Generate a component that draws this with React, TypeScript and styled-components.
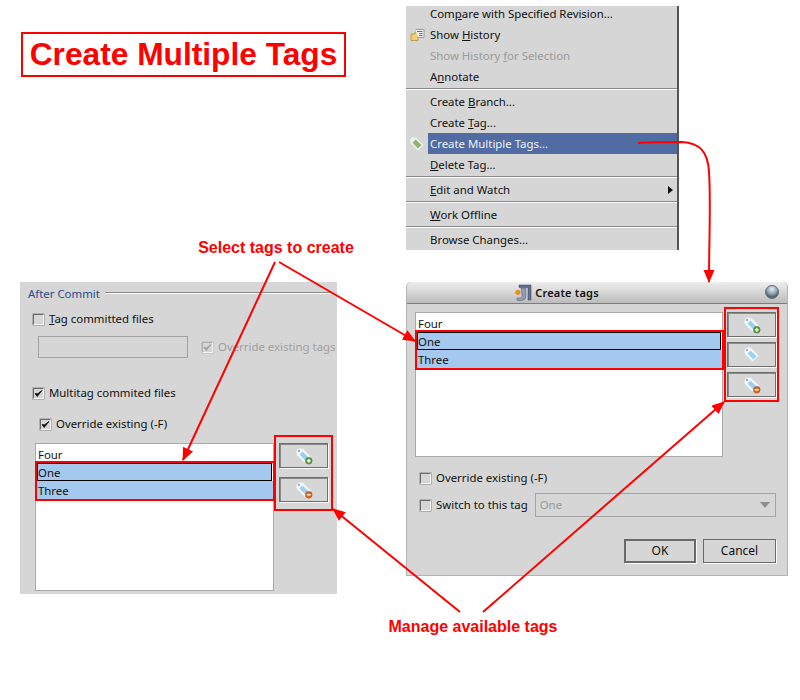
import React from "react";
import styled, { createGlobalStyle, css } from "styled-components";

const Global = createGlobalStyle`
	html, body {
		margin: 0;
		background: #fff;
	}
`;

const uiFont = `"Noto Sans", "Liberation Sans", sans-serif`;
const panel = "#d6d6d6";
const red = "#f00";

const Canvas = styled.div`
	position: relative;
	width: 800px;
	height: 700px;
	overflow: hidden;
	font-family: ${uiFont};
	font-size: 11.4px;
	line-height: 14px;
	color: #111;
`;

const Placed = styled.div<{ $x: number; $y: number; $w: number; $h: number }>`
	position: absolute;
	left: ${(p) => p.$x}px;
	top: ${(p) => p.$y}px;
	width: ${(p) => p.$w}px;
	height: ${(p) => p.$h}px;
	box-sizing: border-box;
`;

const Title = styled(Placed)`
	display: flex;
	align-items: center;
	justify-content: center;
	padding-bottom: 1px;
	border: 2px solid ${red};
	font: bold 31.7px "Liberation Sans", sans-serif;
	color: ${red};
	white-space: nowrap;
`;

const Note = styled(Placed)`
	font: bold 16px/18px "Liberation Sans", sans-serif;
	color: ${red};
	text-align: center;
	white-space: nowrap;
`;

/* context menu */
const Menu = styled(Placed)`
	display: flex;
	flex-direction: column;
	overflow: hidden;
	background: ${panel};
	border-right: 2px solid #555;
`;

const MenuRow = styled.div<{ $off?: boolean }>`
	display: flex;
	flex: none;
	height: 21px;
	align-items: center;
	color: ${(p) => (p.$off ? "#9a9a9a" : "#111")};
	&:first-child {
		margin-top: -3px;
	}
`;

const MenuIcon = styled.div`
	display: flex;
	flex: none;
	width: 22px;
	justify-content: center;
	align-items: center;
`;

const MenuLabel = styled.div<{ $active?: boolean }>`
	display: flex;
	flex: 1;
	height: 100%;
	align-items: center;
	justify-content: space-between;
	padding: 0 4px 0 2px;
	white-space: nowrap;
	${(p) =>
		p.$active &&
		css`
			background: #516ca3;
			color: #eef1f7;
		`}
`;

const SubArrow = styled.span`
	border-left: 5px solid #111;
	border-top: 4px solid transparent;
	border-bottom: 4px solid transparent;
`;

const MenuSep = styled.div`
	flex: none;
	height: 4px;
	background: linear-gradient(#d6d6d6 0 1px, #8a8a8a 1px 2px, #fbfbfb 2px 3px, #d6d6d6 3px);
`;

const Key = styled.span`
	text-decoration: underline;
	text-underline-offset: 1px;
`;

/* dialog */
const Dialog = styled(Placed)`
	display: flex;
	flex-direction: column;
	background: ${panel};
	border: 1px solid #b4b4b4;
	border-top: none;
	border-radius: 5px 5px 0 0;
`;

const TitleBar = styled.div`
	position: relative;
	display: flex;
	flex: none;
	height: 22px;
	align-items: center;
	justify-content: center;
	gap: 3px;
	padding-right: 80px;
	box-sizing: border-box;
	background: linear-gradient(#eeeeee, #bcbcbc);
	border-bottom: 1px solid #7d7d7d;
	border-radius: 5px 5px 0 0;
	font-weight: 600;
	font-size: 11px;
	letter-spacing: 0.2px;
`;

const Ball = styled.div`
	position: absolute;
	right: 8px;
	top: 3px;
	width: 14px;
	height: 14px;
	border-radius: 50%;
	border: 1px solid #5d6670;
	box-sizing: border-box;
	background: radial-gradient(circle at 50% 25%, #e9eef2 0, #93a5b5 45%, #4e5d6d 75%, #a9b8c5 100%);
`;

const DialogBody = styled.div`
	display: flex;
	padding: 3px 0 0 8px;
	align-items: flex-start;
	gap: 1px;
`;

const TagList = styled.div<{ $w: number; $h: number }>`
	flex: none;
	width: ${(p) => p.$w}px;
	height: ${(p) => p.$h}px;
	box-sizing: border-box;
	background: #fff;
	border: 1px solid #aaa;
	padding-top: 1px;
`;

const DialogList = styled(TagList)`
	margin-top: 5px;
`;

const ListItem = styled.div<{ $sel?: boolean; $focus?: boolean }>`
	height: 18px;
	line-height: 20px;
	box-sizing: border-box;
	padding-left: ${(p) => (p.$sel ? "1px" : "2px")};
	background: ${(p) => (p.$sel ? "#a4c8ee" : "transparent")};
	${(p) =>
		p.$focus &&
		css`
			border: 1px solid #000;
			line-height: 18px;
			padding-left: 0;
			margin-right: 1px;
		`}
`;

const Selection = styled.div`
	position: relative;
	margin: -2px -2px 0 -1px;
	border: 2px solid ${red};
`;

const ButtonBox = styled.div<{ $gap: number; $pad: string }>`
	position: relative;
	display: flex;
	flex: none;
	flex-direction: column;
	gap: ${(p) => p.$gap}px;
	padding: ${(p) => p.$pad};
	border: 2px solid ${red};
`;

const ToolButton = styled.div`
	display: flex;
	width: 49px;
	height: 25px;
	box-sizing: border-box;
	align-items: center;
	justify-content: center;
	background: ${panel};
	border: 1px solid #6e6e6e;
	box-shadow: 1px 1px 0 #fafafa, inset 1px 1px 0 #8a8a8a;
`;

const OptionRow = styled.div<{ $top: number; $left: number }>`
	display: flex;
	align-items: center;
	min-height: 14px;
	gap: 5px;
	margin: ${(p) => p.$top}px 0 0 ${(p) => p.$left}px;
	white-space: nowrap;
`;

const Box = styled.span<{ $off?: boolean }>`
	display: flex;
	flex: none;
	width: 11px;
	height: 11px;
	box-sizing: border-box;
	align-items: center;
	justify-content: center;
	border: 1px solid ${(p) => (p.$off ? "#aaa" : "#6a6a6a")};
	border-right-color: #f4f4f4;
	border-bottom-color: #f4f4f4;
	box-shadow: 0 0 0 0.5px ${(p) => (p.$off ? "#bbb" : "#8a8a8a")};
`;

const Combo = styled.div`
	display: flex;
	width: 241px;
	height: 24px;
	margin-left: 2px;
	box-sizing: border-box;
	align-items: center;
	justify-content: space-between;
	padding: 0 5px 0 4px;
	border: 1px solid #a3a3a3;
	color: #9a9a9a;
`;

const ComboArrow = styled.span`
	border-top: 6px solid #8f8f8f;
	border-left: 5px solid transparent;
	border-right: 5px solid transparent;
`;

const DialogActions = styled.div`
	display: flex;
	justify-content: flex-end;
	gap: 7px;
	margin-top: 22px;
	padding-right: 11px;
`;

const ActionButton = styled.div<{ $w: number; $default?: boolean }>`
	display: flex;
	width: ${(p) => p.$w}px;
	height: 24px;
	box-sizing: border-box;
	align-items: center;
	justify-content: center;
	border: ${(p) => (p.$default ? "2px" : "1px")} solid #6a6a6a;
	box-shadow: 1px 1px 0 #fafafa;
	font-size: 12px;
`;

/* settings panel */
const SettingsPanel = styled(Placed)`
	display: flex;
	flex-direction: column;
	padding: 5px 0 0 8px;
	background: ${panel};
`;

const Legend = styled.div`
	display: flex;
	height: 14px;
	align-items: center;
	gap: 5px;
	color: #2b4a86;
	padding-right: 6px;
	&::after {
		content: "";
		flex: 1;
		height: 2px;
		margin-top: -2px;
		background: linear-gradient(#8a8a8a 0 1px, #fafafa 1px);
	}
`;

const Field = styled.div`
	width: 150px;
	height: 22px;
	box-sizing: border-box;
	margin-right: 9px;
	border: 1px solid #a3a3a3;
`;

const FadedText = styled.span`
	color: #a0a0a0;
`;

const ListSection = styled.div`
	display: flex;
	align-items: flex-start;
	margin: 4px 0 0 7px;
`;

const SectionList = styled(TagList)`
	margin-top: 8px;
`;

const Overlay = styled.svg`
	position: absolute;
	left: 0;
	top: 0;
	pointer-events: none;
`;

type TagProps = { badge?: "add" | "del" };

const TagIcon = ({ badge }: TagProps) => (
	<svg width="18" height="18" viewBox="0 0 18 18">
		<path d="M1 4 L4 1 L8 1.5 L16 9.5 L9.5 16 L1.5 8 Z" fill="#f6f8fa" stroke="#cfd3d8" strokeWidth="0.7" />
		<path d="M7.5 4.5 L13.5 10.3 L10.3 13.5 L4.5 7.5 Z" fill="#9bd0f5" />
		<circle cx="4" cy="4" r="1.2" fill="#a3acb5" />
		{badge && (
			<>
				<circle cx="13.8" cy="13.8" r="3.3" fill={badge === "add" ? "#5f9c3c" : "#d8691f"} stroke={badge === "add" ? "#3f7a26" : "#a84c12"} strokeWidth="0.6" />
				<path d="M11.9 13.8 H15.7" stroke="#fff" strokeWidth="1.3" />
				{badge === "add" && <path d="M13.8 11.9 V15.7" stroke="#fff" strokeWidth="1.3" />}
			</>
		)}
	</svg>
);

const MenuTag = () => (
	<svg width="16" height="16" viewBox="0 0 18 18">
		<path d="M1 4 L4 1 L8 1.5 L16.5 10 L10 16.5 L1.5 8 Z" fill="#f0f0f0" stroke="#dcdcdc" strokeWidth="0.7" />
		<path d="M7.5 4 L14 10 L10 14 L4 7.5 Z" fill="#8db56c" />
	</svg>
);

const HistoryIcon = () => (
	<svg width="15" height="14" viewBox="0 0 15 14">
		<path d="M1 6 H5 V4 H8 V12.5 H1 Z" fill="#f2cf74" stroke="#b8913c" strokeWidth="0.8" />
		<path d="M5.5 1.5 H14 V9.5 H8" fill="#f4f4f4" stroke="#7d8aa0" strokeWidth="0.8" />
		<path d="M7 3.5 H12.5 M9 5.5 H12.5 M9 7.5 H12.5" stroke="#4f6fa8" strokeWidth="1" />
	</svg>
);

const LogoIcon = () => (
	<svg width="17" height="17" viewBox="0 0 17 17">
		<path d="M4 1 H16 V16 H13 V3.5 H4 Z" fill="#5f6f8f" stroke="#3c475e" strokeWidth="0.5" />
		<path d="M6 4 H11 V12 Q11 16 7 16.5 H2 V14 H5 Q7 14 7 12 Z" fill="#8f9bb3" stroke="#566178" strokeWidth="0.5" />
		<circle cx="2.9" cy="8.3" r="2.6" fill="#e88f24" />
	</svg>
);

const Tick = ({ color = "#111" }: { color?: string }) => (
	<svg width="9" height="9" viewBox="0 0 9 9">
		<path d="M1 4.5 L3.2 7.5 L8 1.5 L3.6 4.8 Z" fill={color} stroke={color} strokeWidth="0.8" />
	</svg>
);

const Arrows = () => (
	<Overlay width="800" height="700" fill="none" stroke={red} strokeWidth="2">
		<defs>
			<marker id="head" markerWidth="14" markerHeight="12" refX="12" refY="5.5" orient="auto" markerUnits="userSpaceOnUse">
				<path d="M0 0 L13 5.5 L0 11 Z" fill={red} stroke="none" />
			</marker>
		</defs>
		<path d="M638 143 C 655 142, 670 142, 682 142 C 700 143, 708 152, 709 172 C 711 200, 709 240, 709 282" markerEnd="url(#head)" />
		<path d="M275 262 L183 460" markerEnd="url(#head)" />
		<path d="M279 262 L415 341" markerEnd="url(#head)" />
		<path d="M460 612 L333 509" markerEnd="url(#head)" />
		<path d="M483 612 L724 402" markerEnd="url(#head)" />
	</Overlay>
);

const App = () => (
	<Canvas>
		<Global />
		<Title $x={21} $y={32} $w={325} $h={45}>
			Create Multiple Tags
		</Title>

		<Menu $x={406} $y={6} $w={273} $h={244}>
			<MenuRow>
				<MenuIcon />
				<MenuLabel>
					<span>Com<Key>p</Key>are with Specified Revision...</span>
				</MenuLabel>
			</MenuRow>
			<MenuRow>
				<MenuIcon>
					<HistoryIcon />
				</MenuIcon>
				<MenuLabel>
					<span>Show <Key>H</Key>istory</span>
				</MenuLabel>
			</MenuRow>
			<MenuRow $off>
				<MenuIcon />
				<MenuLabel>
					<span>Show History <Key>f</Key>or Selection</span>
				</MenuLabel>
			</MenuRow>
			<MenuRow>
				<MenuIcon />
				<MenuLabel>
					<span>A<Key>n</Key>notate</span>
				</MenuLabel>
			</MenuRow>
			<MenuSep />
			<MenuRow>
				<MenuIcon />
				<MenuLabel>
					<span>Create <Key>B</Key>ranch...</span>
				</MenuLabel>
			</MenuRow>
			<MenuRow>
				<MenuIcon />
				<MenuLabel>
					<span>Create <Key>T</Key>ag...</span>
				</MenuLabel>
			</MenuRow>
			<MenuRow>
				<MenuIcon>
					<MenuTag />
				</MenuIcon>
				<MenuLabel $active>
					<span>Create Multiple Tags...</span>
				</MenuLabel>
			</MenuRow>
			<MenuRow>
				<MenuIcon />
				<MenuLabel>
					<span><Key>D</Key>elete Tag...</span>
				</MenuLabel>
			</MenuRow>
			<MenuSep />
			<MenuRow>
				<MenuIcon />
				<MenuLabel>
					<span><Key>E</Key>dit and Watch</span>
					<SubArrow />
				</MenuLabel>
			</MenuRow>
			<MenuSep />
			<MenuRow>
				<MenuIcon />
				<MenuLabel>
					<span><Key>W</Key>ork Offline</span>
				</MenuLabel>
			</MenuRow>
			<MenuSep />
			<MenuRow>
				<MenuIcon />
				<MenuLabel>
					<span>Browse Changes...</span>
				</MenuLabel>
			</MenuRow>
		</Menu>

		<SettingsPanel $x={20} $y={282} $w={317} $h={312}>
			<Legend>After Commit</Legend>
			<OptionRow $top={11} $left={5}>
				<Box />
				<span><Key>T</Key>ag committed files</span>
			</OptionRow>
			<OptionRow $top={10} $left={10}>
				<Field />
				<Box $off>
					<Tick color="#a0a0a0" />
				</Box>
				<FadedText>Override existing tags</FadedText>
			</OptionRow>
			<OptionRow $top={28} $left={5}>
				<Box>
					<Tick />
				</Box>
				<span>Multitag commited files</span>
			</OptionRow>
			<OptionRow $top={17} $left={12}>
				<Box>
					<Tick />
				</Box>
				<span>Override existing (-F)</span>
			</OptionRow>
			<ListSection>
				<SectionList $w={239} $h={148}>
					<ListItem>Four</ListItem>
					<Selection>
						<ListItem $sel $focus>One</ListItem>
						<ListItem $sel>Three</ListItem>
					</Selection>
				</SectionList>
				<ButtonBox $gap={9} $pad="6px 3px 7px 3px">
					<ToolButton>
						<TagIcon badge="add" />
					</ToolButton>
					<ToolButton>
						<TagIcon badge="del" />
					</ToolButton>
				</ButtonBox>
			</ListSection>
		</SettingsPanel>

		<Dialog $x={406} $y={282} $w={382} $h={294}>
			<TitleBar>
				<LogoIcon />
				Create tags
				<Ball />
			</TitleBar>
			<DialogBody>
				<DialogList $w={308} $h={145}>
					<ListItem>Four</ListItem>
					<Selection>
						<ListItem $sel $focus>One</ListItem>
						<ListItem $sel>Three</ListItem>
					</Selection>
				</DialogList>
				<ButtonBox $gap={5} $pad="3px 1px">
					<ToolButton>
						<TagIcon badge="add" />
					</ToolButton>
					<ToolButton>
						<TagIcon />
					</ToolButton>
					<ToolButton>
						<TagIcon badge="del" />
					</ToolButton>
				</ButtonBox>
			</DialogBody>
			<OptionRow $top={14} $left={13}>
				<Box />
				<span>Override existing (-F)</span>
			</OptionRow>
			<OptionRow $top={8} $left={13}>
				<Box />
				<span>Switch to this tag</span>
				<Combo>
					One
					<ComboArrow />
				</Combo>
			</OptionRow>
			<DialogActions>
				<ActionButton $w={72} $default>OK</ActionButton>
				<ActionButton $w={73}>Cancel</ActionButton>
			</DialogActions>
		</Dialog>

		<Note $x={176} $y={239} $w={200} $h={18}>Select tags to create</Note>
		<Note $x={373} $y={618} $w={200} $h={18}>Manage available tags</Note>
		<Arrows />
	</Canvas>
);

export default App;
